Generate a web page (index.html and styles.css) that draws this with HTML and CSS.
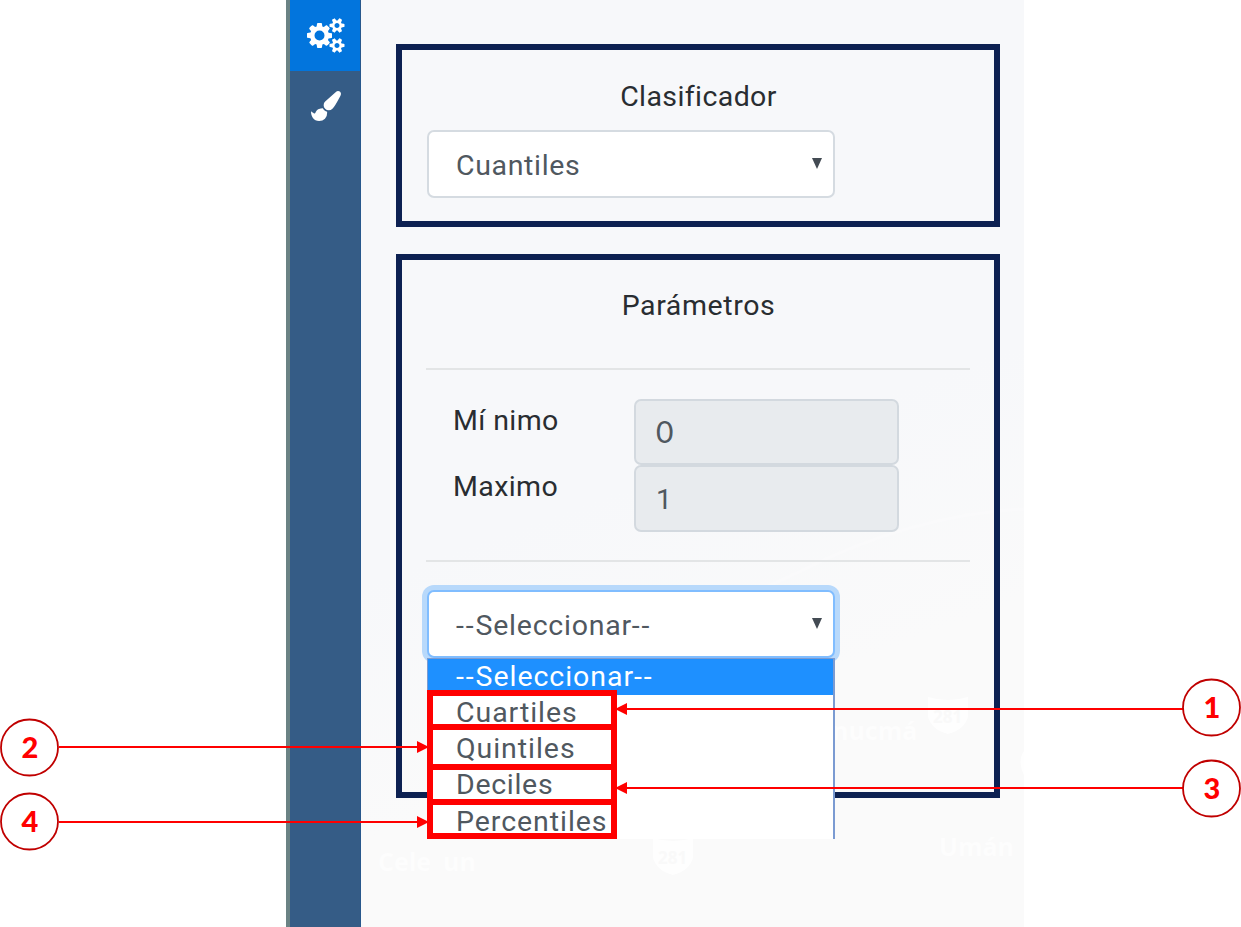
FILE: index.html
```html
<!DOCTYPE html>
<html lang="es">
<head>
<meta charset="utf-8">
<title>Clasificador</title>
<link rel="stylesheet" href="styles.css">
</head>
<body>
<main class="app">
  <nav class="sidebar">
    <a class="tab tab-active"><svg class="icon-cogs" viewBox="0 0 1920 1792"><path d="M896 896q0-106-75-181t-181-75-181 75-75 181 75 181 181 75 181-75 75-181zm768 512q0-52-38-90t-90-38-90 38-38 90q0 53 37.5 90.5t90.5 37.5 90.5-37.5 37.5-90.5zm0-1024q0-52-38-90t-90-38-90 38-38 90q0 53 37.5 90.5t90.5 37.5 90.5-37.5 37.5-90.5zm-384 421v185q0 10-7 19.5t-16 10.5l-155 24q-11 35-32 76 34 48 90 115 7 11 7 20 0 12-7 19-23 30-82.5 89.5t-78.5 59.5q-11 0-21-7l-115-90q-37 19-77 31-11 108-23 155-7 24-30 24h-186q-11 0-20-7.5t-10-17.5l-23-153q-34-10-75-31l-118 89q-7 7-20 7-11 0-21-8-144-133-144-160 0-9 7-19 10-14 41-53t47-61q-23-44-35-82l-152-24q-10-1-17-9.5t-7-19.5v-185q0-10 7-19.5t16-10.5l155-24q11-35 32-76-34-48-90-115-7-11-7-20 0-12 7-20 22-30 82-89t79-59q11 0 21 7l115 90q34-18 77-32 11-108 23-154 7-24 30-24h186q11 0 20 7.5t10 17.5l23 153q34 10 75 31l118-89q8-7 20-7 11 0 21 8 144 133 144 160 0 8-7 19-12 16-42 54t-45 60q23 48 34 82l152 23q10 2 17 10.5t7 19.5zm640 533v140q0 16-149 31-12 27-30 52 51 113 51 138 0 4-4 7-122 71-124 71-8 0-46-47t-52-68q-20 2-30 2t-30-2q-14 21-52 68t-46 47q-2 0-124-71-4-3-4-7 0-25 51-138-18-25-30-52-149-15-149-31v-140q0-16 149-31 13-29 30-52-51-113-51-138 0-4 4-7 4-2 35-20t59-34 30-16q8 0 46 46.5t52 67.5q20-2 30-2t30 2q51-71 92-112l6-2q4 0 124 70 4 3 4 7 0 25-51 138 17 23 30 52 149 15 149 31zm0-1024v140q0 16-149 31-12 27-30 52 51 113 51 138 0 4-4 7-122 71-124 71-8 0-46-47t-52-68q-20 2-30 2t-30-2q-14 21-52 68t-46 47q-2 0-124-71-4-3-4-7 0-25 51-138-18-25-30-52-149-15-149-31v-140q0-16 149-31 13-29 30-52-51-113-51-138 0-4 4-7 4-2 35-20t59-34 30-16q8 0 46 46.5t52 67.5q20-2 30-2t30 2q51-71 92-112l6-2q4 0 124 70 4 3 4 7 0 25-51 138 17 23 30 52 149 15 149 31z"/></svg></a>
    <a class="tab"><svg class="icon-brush" viewBox="0 0 1792 1792"><path d="M1615 0q70 0 122.500 46.500t52.500 116.500q0 63-45 151-332 629-465 752-97 91-218 91-126 0-216.500-92.500t-90.500-219.500q0-128 92-212l638-579q59-54 130-54zm-909 1034q39 76 106.500 130t150.500 76l1 71q4 213-129.500 347t-348.500 134q-123 0-218-46.500t-152.500-127.500-86.500-183-29-220q7 5 41 30t62 44.500 59 36.500 46 17q41 0 55-37 25-66 57.500-112.500t69.500-76 88-47.500 103-25.500 125-10.500z"/></svg></a>
  </nav>
  <div class="content">
    <svg class="map" viewBox="0 0 663 927">
      <path class="road" d="M663 509C590 512 510 535 440 571C410 585 370 600 330 640" />
      <text x="17" y="871">Cele</text><text x="82" y="871">un</text>
      <text x="471" y="740">nucmá</text>
      <text x="578" y="856">Umán</text>
      <path class="shield" d="M567 697q20 6 40 0v20q-4 13-20 17q-16-4-20-17zM292 838q20 6 40 0v20q-4 13-20 17q-16-4-20-17z"/>
      <text class="route" x="297" y="864">281</text><text class="route" x="572" y="723">281</text>
      <path class="shield" d="M663 751q-7 10 0 24z"/>
    </svg>
    <section class="card card-classifier">
      <h2 class="title">Clasificador</h2>
      <div class="select"><span class="t-cuantiles">Cuantiles</span><i class="caret"></i></div>
    </section>
    <section class="card card-params">
      <h2 class="title title-params">Parámetros</h2>
      <hr class="rule">
      <div class="fields">
        <label class="label">Mí nimo</label><div class="input input-min">0</div>
        <label class="label">Maximo</label><div class="input input-max">1</div>
      </div>
      <hr class="rule">
      <div class="select select-open"><span class="t-sel"><span class="dash">--</span>Seleccionar<span class="dash">--</span></span><i class="caret"></i>
        <ul class="menu">
          <li class="option option-active"><span class="dash">--</span>Seleccionar<span class="dash">--</span></li>
          <li class="option">Cuartiles</li>
          <li class="option">Quintiles</li>
          <li class="option option-deciles">Deciles</li>
          <li class="option">Percentiles</li>
        </ul>
      </div>
    </section>
  </div>
</main>
<svg class="notes" viewBox="0 0 1241 927">
  <g class="frames">
    <rect x="430" y="693" width="184" height="34"/>
    <rect x="430" y="727" width="184" height="40"/>
    <rect x="430" y="767" width="184" height="35"/>
    <rect x="430" y="802" width="184" height="34"/>
  </g>
  <path class="lines" d="M626 709H1183M626 788H1183M59 747H418M59 822H418"/>
  <path class="heads" d="M615 709l12-6v12zM615 788l12-6v12zM429 747l-12-6v12zM429 822l-12-6v12z"/>
  <g class="circles">
    <ellipse cx="1211.500" cy="707.500" rx="28.500" ry="28"/>
    <ellipse cx="1211.500" cy="788.500" rx="28.500" ry="28"/>
    <ellipse cx="29.500" cy="747.500" rx="28.500" ry="28"/>
    <ellipse cx="29.500" cy="821.500" rx="28.500" ry="28"/>
  </g>
  <g class="numbers">
    <text x="1212" y="718">1</text>
    <text x="1212" y="799">3</text>
    <text x="30" y="758">2</text>
    <text x="30" y="832">4</text>
  </g>
</svg>
</body>
</html>
```
FILE: styles.css
```css
* { box-sizing: border-box; }
body {
  position: relative;
  width: 1241px;
  height: 927px;
  margin: 0;
  overflow: hidden;
  background: #fff;
  font-family: Roboto, "Liberation Sans", sans-serif;
  font-size: 28.5px;
  color: #292d31;
}
.app {
  display: flex;
  width: 738px;
  height: 927px;
  margin-left: 286px;
}
.sidebar {
  flex: none;
  width: 75px;
  border-left: 4px solid #6b8284;
  border-right: 1px solid #28588c;
  background: #355c86;
}
.tab { display: flex; height: 71px; padding-left: 2px; justify-content: center; align-items: center; }
.tab-active { background: #0275dd; }
.tab svg { fill: #fff; }
.icon-cogs { width: 37.5px; height: 35px; margin-top: -1px; }
.icon-brush { width: 30px; height: 30px; margin-top: -1px; }
.content {
  position: relative;
  flex: 1;
  padding: 44px 24px 0 35px;
  background: linear-gradient(160deg, #f7f8fa 50%, #fafafa 72%);
}
.map {
  position: absolute;
  left: 0;
  top: 0;
  width: 663px;
  height: 927px;
  fill: #fff;
  font: bold 25px "Open Sans", sans-serif;
}
.map text { opacity: .7; }
.road { fill: none; stroke: #fafafb; stroke-width: 3; }
.shield { fill: #fff; opacity: .8; }
.map .route { fill: #f8f8f8; font-size: 17px; }
.card {
  position: relative;
  width: 604px;
  border: 6px solid #0d2152;
  padding: 0 24px;
}
.card-classifier { height: 183px; padding-top: 30px; }
.card-params { height: 544px; margin-top: 27px; padding-top: 29px; }
.title {
  margin: 0;
  height: 50px;
  padding-left: 1px;
  line-height: 34px;
  font-size: inherit;
  font-weight: 400;
  letter-spacing: .4px;
  text-align: center;
}
.title-params { height: 79px; letter-spacing: .6px; }
.select {
  position: relative;
  display: flex;
  align-items: center;
  justify-content: space-between;
  width: 408px;
  height: 68px;
  margin-left: 1px;
  padding: 3px 11px 0 27px;
  border: 2px solid #d5dbe1;
  border-radius: 7px;
  background: #fff;
  color: #50585f;
}
.t-cuantiles { letter-spacing: .65px; }
.t-sel { letter-spacing: .75px; }
.dash { letter-spacing: 1.9px; }
.caret {
  margin-top: -4px;
  border: 5.500px solid transparent;
  border-top: 11px solid #434b53;
  border-bottom: 0;
}
.rule { margin: 0; border: 0; height: 2px; background: #e3e5e6; }
.fields {
  display: grid;
  grid-template-columns: 208px 265px;
  grid-template-rows: 66px 67px;
  padding-top: 29px;
  height: 190px;
}
.label { padding-left: 27px; line-height: 44px; letter-spacing: .4px; }
.input {
  padding: 2px 20px 0;
  border: 2px solid #d3d9df;
  border-radius: 7px;
  background: #e8ebee;
  color: #50585f;
  line-height: 60px;
}
.input-min { font-family: Lato, sans-serif; font-size: 30px; line-height: 57px; }
.input-max { line-height: 62px; }
.select-open {
  margin-top: 28px;
  border-color: #80bdff;
  box-shadow: 0 0 0 5px #b8d9fb;
}
.menu {
  position: absolute;
  left: -2px;
  top: 66px;
  width: 408px;
  height: 181px;
  margin: 0;
  padding: 0;
  overflow: hidden;
  list-style: none;
  border: solid #7b9bd2;
  border-width: 1px 2px 0 1px;
  background: #fff;
}
.option { height: 36.400px; padding-left: 28px; line-height: 36px; letter-spacing: .95px; }
.option-deciles { letter-spacing: .7px; }
.option-active { height: 35.500px; background: #1e90ff; color: #fff; }
.notes { position: absolute; left: 0; top: 0; width: 1241px; height: 927px; }
.frames { fill: none; stroke: #f00; stroke-width: 6; }
.lines { fill: none; stroke: #f00; stroke-width: 2; }
.heads, .numbers { fill: #f00; }
.circles { fill: #fff; stroke: #c00000; stroke-width: 1.800; }
.numbers { font: 900 29px Lato, sans-serif; text-anchor: middle; }
```
